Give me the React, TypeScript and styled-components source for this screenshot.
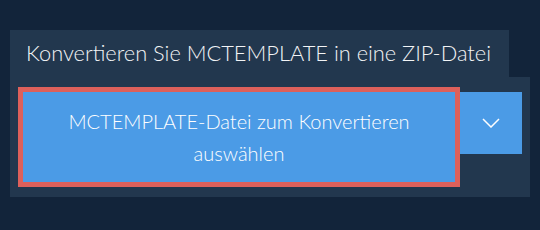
import React from 'react';
import styled, { createGlobalStyle } from 'styled-components';

const GlobalStyle = createGlobalStyle`
  html, body {
    margin: 0;
    padding: 0;
    background: #12243a;
    font-family: Lato, "Open Sans", sans-serif;
  }
`;

const Page = styled.div`
  width: 540px;
  height: 230px;
  padding: 30px 0 0 10px;
  box-sizing: border-box;
`;

const TabLabel = styled.div`
  width: 499px;
  height: 47px;
  box-sizing: border-box;
  background: #22374e;
  color: #f2f4f6;
  font-size: 21.8px;
  font-weight: 300;
  line-height: 46px;
  padding-left: 16px;
  white-space: nowrap;
`;

const Panel = styled.div`
  width: 520px;
  box-sizing: border-box;
  background: #22374e;
  padding: 10px 8px;
  display: flex;
  align-items: flex-start;
`;

const PickButton = styled.button`
  width: 442px;
  height: 100px;
  box-sizing: border-box;
  border: 5px solid #dd605b;
  background: #4b9be6;
  color: #ffffff;
  font-family: Lato, "Open Sans", sans-serif;
  font-size: 20px;
  font-weight: 300;
  line-height: 32px;
  padding: 0 30px;
  cursor: pointer;
`;

const MenuButton = styled.button`
  width: 62px;
  height: 62px;
  margin-top: 5px;
  border: none;
  background: #4b9be6;
  display: flex;
  align-items: center;
  justify-content: center;
  padding: 0;
  cursor: pointer;
`;

const Chevron = () => (
  <svg width="18" height="10" viewBox="0 0 18 10">
    <polyline points="1,1 9,9 17,1" fill="none" stroke="#ffffff" strokeWidth="1.5" />
  </svg>
);

const App = () => {
  return (
    <Page>
      <GlobalStyle />
      <TabLabel>Konvertieren Sie MCTEMPLATE in eine ZIP-Datei</TabLabel>
      <Panel>
        <PickButton>MCTEMPLATE-Datei zum Konvertieren auswählen</PickButton>
        <MenuButton aria-label="Weitere Optionen">
          <Chevron />
        </MenuButton>
      </Panel>
    </Page>
  );
};

export default App;
